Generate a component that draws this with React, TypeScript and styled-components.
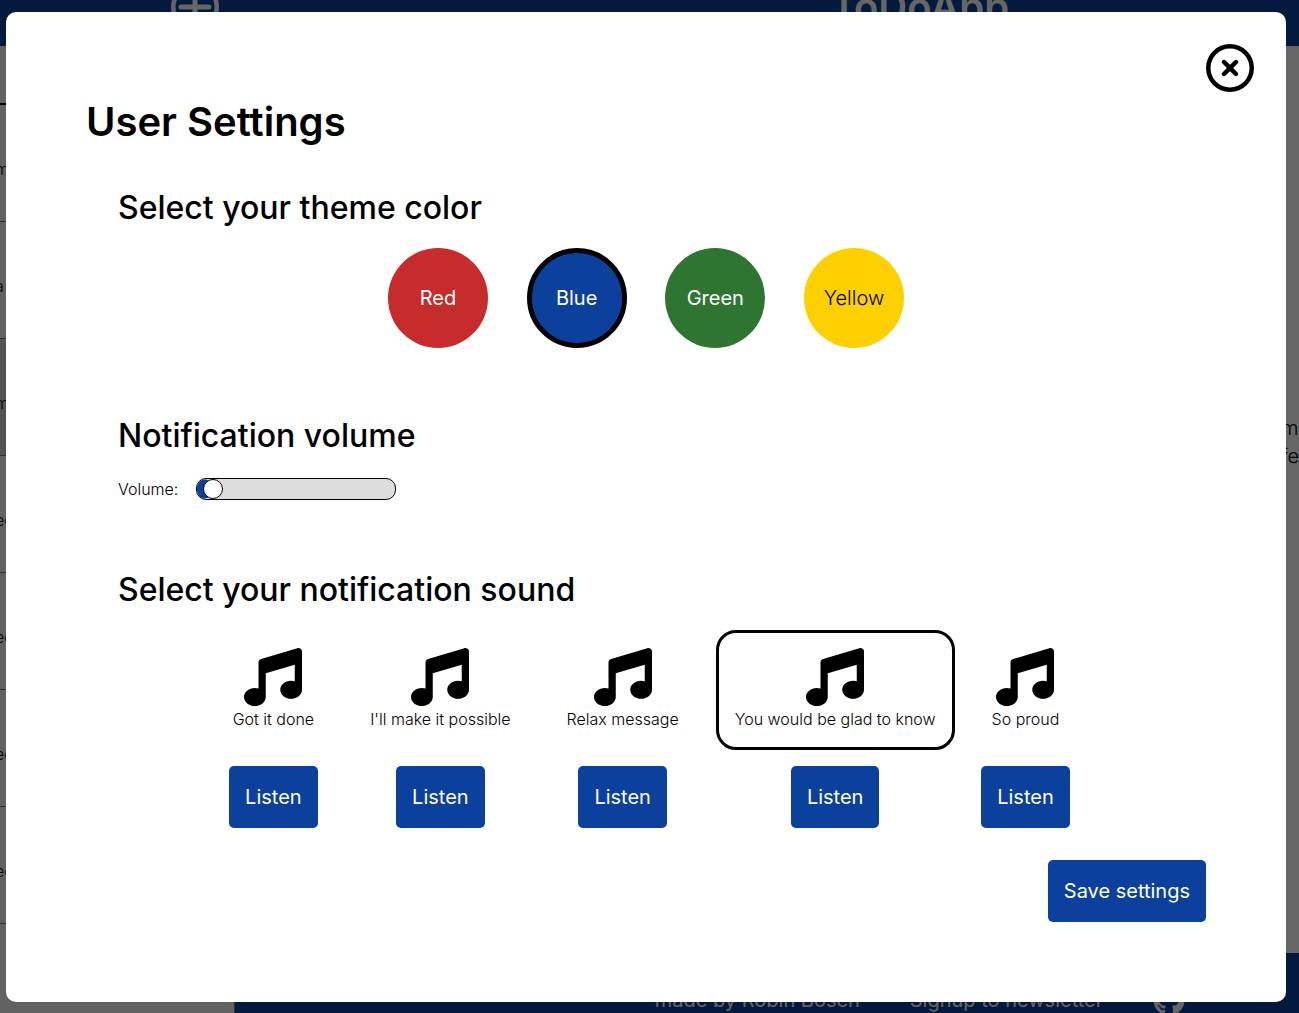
import React, { useState } from "react";
import styled, { createGlobalStyle } from "styled-components";
import { FaGithub, FaMusic, FaRegCircleXmark } from "react-icons/fa6";

const blue = "#0b409c";

const GlobalStyle = createGlobalStyle`
  *, *::before, *::after { box-sizing: border-box; }
  body {
    margin: 0;
    overflow: hidden;
    font-family: Inter, "Liberation Sans", sans-serif;
    font-size: 16px;
    font-weight: 300;
    color: #000;
    background: #fff;
  }
  h1, h2, p, ul { margin: 0; padding: 0; }
  button { font-family: inherit; border: 0; padding: 0; cursor: pointer; }
`;

const Viewport = styled.div`
  height: 100vh;
  overflow: hidden;
`;

const Page = styled.div`
  display: flex;
  flex-direction: column;
  width: calc(100% + 306px);
  height: calc(100vh + 66px);
  margin-top: -32px;
`;

const Header = styled.header`
  display: grid;
  grid-template-columns: 235px 1fr;
  align-items: center;
  flex: none;
  height: 78px;
  color: #fff;
  background: ${blue};
`;

const AddButton = styled.button`
  justify-self: end;
  display: flex;
  margin-right: 16px;
  color: inherit;
  background: none;
`;

const AppName = styled.p`
  text-align: center;
  font-size: 40px;
  line-height: 48px;
  font-weight: 600;
`;

const Body = styled.div`
  flex: 1;
  display: grid;
  grid-template-columns: 235px 1fr;
`;

const Sidebar = styled.aside`
  border-right: 1px solid #777;
  background: #f4f4f4;
`;

const SidebarTop = styled.div`
  height: 59px;
  border-bottom: 2px solid #000;
`;

const TaskList = styled.ul`
  list-style: none;
  text-indent: -5px;
`;

const Task = styled.li<{ $active?: boolean }>`
  height: 117px;
  padding-top: 52px;
  line-height: 24px;
  border-bottom: 1px solid #777;
  background: ${(p) => (p.$active ? "#d0d0d0" : "transparent")};
`;

const Content = styled.div`
  display: flex;
  flex-direction: column;
`;

const Main = styled.main`
  flex: 1;
  display: flex;
  justify-content: flex-end;
  align-items: flex-start;
  padding: 368px 304px 0 0;
`;

const Intro = styled.p`
  width: 20px;
  font-size: 20px;
  line-height: 28px;
`;

const Footer = styled.footer`
  display: flex;
  justify-content: center;
  align-items: center;
  gap: 50px;
  height: 94px;
  font-size: 20px;
  line-height: 30px;
  font-weight: 400;
  color: #fff;
  background: ${blue};

  a { display: flex; color: inherit; text-decoration: none; }
`;

const Overlay = styled.div`
  position: fixed;
  inset: 0;
  display: flex;
  padding: 12px 13px 11px 6px;
  background: rgba(0, 0, 0, 0.6);
`;

const Dialog = styled.section`
  position: relative;
  flex: 1;
  padding: 80px;
  border-radius: 10px;
  background: #fff;
`;

const CloseButton = styled.button`
  position: absolute;
  top: 32px;
  right: 32px;
  display: flex;
  color: #000;
  background: none;
`;

const Title = styled.h1`
  font-size: 40px;
  line-height: 60px;
  font-weight: 600;
`;

const Form = styled.form`
  display: flex;
  flex-direction: column;
`;

const Group = styled.section`
  padding: 32px 32px 0;
`;

const SubTitle = styled.h2`
  margin-bottom: 16px;
  font-size: 32px;
  line-height: 48px;
  font-weight: 500;
`;

const Swatches = styled.div`
  display: flex;
  justify-content: space-between;
  width: 516px;
  max-width: 100%;
  margin: 0 auto 32px;
`;

const Swatch = styled.button<{ $color: string; $dark?: boolean; $selected: boolean }>`
  width: 100px;
  height: 100px;
  border: ${(p) => (p.$selected ? "5px solid #000" : "0")};
  border-radius: 50%;
  font-size: 20px;
  font-weight: ${(p) => (p.$dark ? 300 : 400)};
  color: ${(p) => (p.$dark ? "#000" : "#fff")};
  background: ${(p) => p.$color};
`;

const VolumeRow = styled.div`
  display: flex;
  align-items: center;
  gap: 18px;
  height: 26px;
  margin-bottom: 32px;
`;

const Slider = styled.input`
  appearance: none;
  width: 200px;
  height: 22px;
  margin: 0;
  overflow: hidden;
  border: 1px solid #000;
  border-radius: 10px;
  background: #ddd;

  &::-webkit-slider-thumb {
    appearance: none;
    width: 20px;
    height: 20px;
    border: 1px solid #000;
    border-radius: 50%;
    background: #fff;
    box-shadow: -10px 0 0 ${blue};
  }
`;

const Sounds = styled.div`
  display: flex;
  justify-content: center;
  gap: 18px;
`;

const Sound = styled.div`
  display: flex;
  flex-direction: column;
  align-items: center;
  gap: 16px;
`;

const SoundCard = styled.button<{ $selected: boolean }>`
  display: flex;
  flex-direction: column;
  align-items: center;
  padding: 15px 16px;
  border: 3px solid ${(p) => (p.$selected ? "#000" : "transparent")};
  border-radius: 20px;
  font-size: 16px;
  line-height: 26px;
  font-weight: 300;
  color: #000;
  background: none;
`;

const PrimaryButton = styled.button`
  padding: 16px;
  border-radius: 5px;
  font-size: 20px;
  line-height: 30px;
  font-weight: 400;
  color: #fff;
  background: ${blue};
`;

const Actions = styled.div`
  display: flex;
  justify-content: flex-end;
  padding-top: 32px;
`;

const themes = [
  { name: "Red", color: "#c62c2c" },
  { name: "Blue", color: blue },
  { name: "Green", color: "#2f7532" },
  { name: "Yellow", color: "#ffd000", dark: true },
];

const sounds = [
  "Got it done",
  "I'll make it possible",
  "Relax message",
  "You would be glad to know",
  "So proud",
];

const tasks = ["m", "a", "m", "ec", "ec", "ec", "ec"];

export default function App() {
  const [theme, setTheme] = useState("Blue");
  const [sound, setSound] = useState(sounds[3]);
  const [volume, setVolume] = useState("3");

  return (
    <>
      <GlobalStyle />
      <Viewport>
        <Page>
          <Header>
            <AddButton type="button">
              <svg width="48" height="48" viewBox="0 0 48 48" fill="none" stroke="currentColor" strokeLinecap="round">
                <circle cx="24" cy="24" r="21.75" strokeWidth="4.5" />
                <path d="M10 24H38M24 10V38" strokeWidth="5" />
              </svg>
            </AddButton>
            <AppName>ToDoApp</AppName>
          </Header>
          <Body>
            <Sidebar>
              <SidebarTop />
              <TaskList>
                {tasks.map((task, i) => (
                  <Task key={i} $active={i === 2}>{task}</Task>
                ))}
              </TaskList>
            </Sidebar>
            <Content>
              <Main>
                <Intro>m<br />fe</Intro>
              </Main>
              <Footer>
                <span>made by Robin Bosch</span>
                <a href="#newsletter">Signup to newsletter</a>
                <a href="#github"><FaGithub size={32} /></a>
              </Footer>
            </Content>
          </Body>
        </Page>
      </Viewport>
      <Overlay>
        <Dialog role="dialog" aria-labelledby="settings-title">
          <CloseButton type="button">
            <FaRegCircleXmark size={48} />
          </CloseButton>
          <Title id="settings-title">User Settings</Title>
          <Form onSubmit={(e) => e.preventDefault()}>
            <Group>
              <SubTitle>Select your theme color</SubTitle>
              <Swatches>
                {themes.map((t) => (
                  <Swatch
                    key={t.name}
                    type="button"
                    $color={t.color}
                    $dark={t.dark}
                    $selected={t.name === theme}
                    onClick={() => setTheme(t.name)}
                  >
                    {t.name}
                  </Swatch>
                ))}
              </Swatches>
            </Group>
            <Group>
              <SubTitle>Notification volume</SubTitle>
              <VolumeRow>
                <label htmlFor="volume">Volume:</label>
                <Slider
                  id="volume"
                  type="range"
                  min="0"
                  max="100"
                  value={volume}
                  onChange={(e) => setVolume(e.target.value)}
                />
              </VolumeRow>
            </Group>
            <Group>
              <SubTitle>Select your notification sound</SubTitle>
              <Sounds>
                {sounds.map((name) => (
                  <Sound key={name}>
                    <SoundCard type="button" $selected={name === sound} onClick={() => setSound(name)}>
                      <FaMusic size={58} />
                      <span>{name}</span>
                    </SoundCard>
                    <PrimaryButton type="button">Listen</PrimaryButton>
                  </Sound>
                ))}
              </Sounds>
            </Group>
            <Actions>
              <PrimaryButton type="submit">Save settings</PrimaryButton>
            </Actions>
          </Form>
        </Dialog>
      </Overlay>
    </>
  );
}
